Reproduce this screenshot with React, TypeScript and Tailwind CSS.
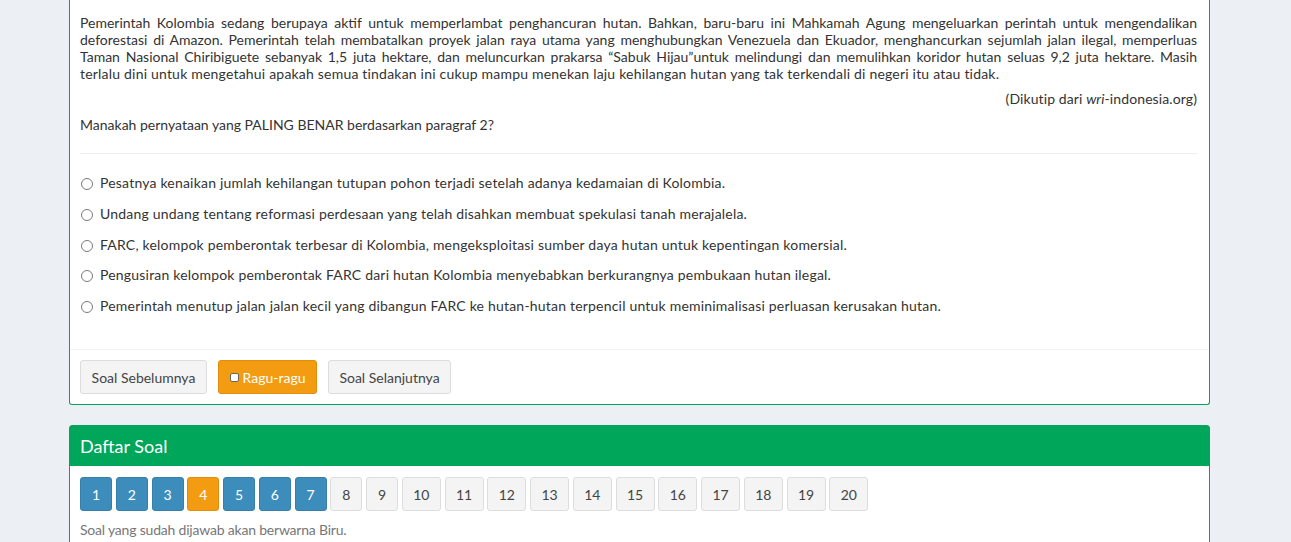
const paragraph = [
  "Pemerintah Kolombia sedang berupaya aktif untuk memperlambat penghancuran hutan. Bahkan, baru-baru ini Mahkamah Agung mengeluarkan perintah untuk mengendalikan",
  "deforestasi di Amazon. Pemerintah telah membatalkan proyek jalan raya utama yang menghubungkan Venezuela dan Ekuador, menghancurkan sejumlah jalan ilegal, memperluas",
  "Taman Nasional Chiribiguete sebanyak 1,5 juta hektare, dan meluncurkan prakarsa \u201cSabuk Hijau\u201duntuk melindungi dan memulihkan koridor hutan seluas 9,2 juta hektare. Masih",
];

const options = [
  "Pesatnya kenaikan jumlah kehilangan tutupan pohon terjadi setelah adanya kedamaian di Kolombia.",
  "Undang undang tentang reformasi perdesaan yang telah disahkan membuat spekulasi tanah merajalela.",
  "FARC, kelompok pemberontak terbesar di Kolombia, mengeksploitasi sumber daya hutan untuk kepentingan komersial.",
  "Pengusiran kelompok pemberontak FARC dari hutan Kolombia menyebabkan berkurangnya pembukaan hutan ilegal.",
  "Pemerintah menutup jalan jalan kecil yang dibangun FARC ke hutan-hutan terpencil untuk meminimalisasi perluasan kerusakan hutan.",
];

const answered = [1, 2, 3, 5, 6, 7];

function NumberButton({ n }: { n: number }) {
  const base =
    "h-[34px] rounded-[3px] border flex items-center justify-center text-[14px] " +
    (n < 10 ? "w-[32px]" : "w-[39px]");
  let color = "bg-[#f4f4f4] border-[#ddd] text-[#444]";
  if (n === 4) color = "bg-[#f39c12] border-[#e08e0b] text-white";
  else if (answered.includes(n)) color = "bg-[#3c8dbc] border-[#367fa9] text-white";
  return <button className={base + " " + color}>{n}</button>;
}

export default function App() {
  return (
    <div className="min-h-screen bg-[#ecf0f5] pl-[69px] pr-[81px] text-[#333] font-['Lato','Liberation_Sans',sans-serif] text-[14px] overflow-hidden">
      {/* soal box */}
      <div className="bg-white border border-t-0 border-[#00a65a] rounded-b-[3px]">
        <div className="pl-[10px] pr-[12px] pt-[14px]">
          <div className="leading-[17px]">
            {paragraph.map((line, i) => (
              <div key={i} className="text-justify [text-align-last:justify]">
                {line}
              </div>
            ))}
            <div className="tracking-[0.2px]">
              terlalu dini untuk mengetahui apakah semua tindakan ini cukup mampu menekan laju kehilangan hutan yang tak terkendali di negeri itu atau tidak.
            </div>
          </div>
          <p className="mt-[7px] leading-[20px] text-right tracking-[0.1px]">
            (Dikutip dari <i>wri</i>-indonesia.org)
          </p>
          <p className="mt-[6px] leading-[20px]">Manakah pernyataan yang PALING BENAR berdasarkan paragraf 2?</p>
          <hr className="mt-[18px] border-t border-[#eee]" />
          <div className="mt-[19px] flex flex-col gap-[10.75px] tracking-[0.2px]">
            {options.map((o, i) => (
              <label key={i} className="flex items-center leading-[20px]">
                <span className="ml-[1px] mt-[2px] w-[12px] h-[12px] rounded-full border border-[#7a7a7a] bg-white shrink-0" />
                <span className="ml-[7px]">{o}</span>
              </label>
            ))}
          </div>
        </div>
        <div className="mt-[33px] border-t border-[#f4f4f4] px-[10px] pt-[10px] pb-[10px] flex gap-[11px]">
          <button className="w-[127px] h-[34px] rounded-[3px] border border-[#ddd] bg-[#f4f4f4] text-[#444] text-[14px]">
            Soal Sebelumnya
          </button>
          <button className="w-[99px] h-[34px] rounded-[3px] border border-[#e08e0b] bg-[#f39c12] text-white text-[14px] flex items-center justify-center gap-[4px]">
            <span className="w-[9px] h-[9px] rounded-[2px] bg-white border border-[#666]" />
            Ragu-ragu
          </button>
          <button className="w-[123px] h-[34px] rounded-[3px] border border-[#ddd] bg-[#f4f4f4] text-[#444] text-[14px]">
            Soal Selanjutnya
          </button>
        </div>
      </div>

      {/* daftar soal */}
      <div className="mt-[20px] bg-white border border-[#00a65a] rounded-t-[3px]">
        <div className="bg-[#00a65a] h-[40px] px-[10px] flex items-center text-white text-[18px]">Daftar Soal</div>
        <div className="px-[10px] pt-[11px] pb-[20px]">
          <div className="flex gap-[3.75px]">
            {Array.from({ length: 20 }, (_, i) => (
              <NumberButton key={i} n={i + 1} />
            ))}
          </div>
          <p className="mt-[9px] leading-[20px] text-[#777] tracking-[-0.2px]">Soal yang sudah dijawab akan berwarna Biru.</p>
        </div>
      </div>
    </div>
  );
}
